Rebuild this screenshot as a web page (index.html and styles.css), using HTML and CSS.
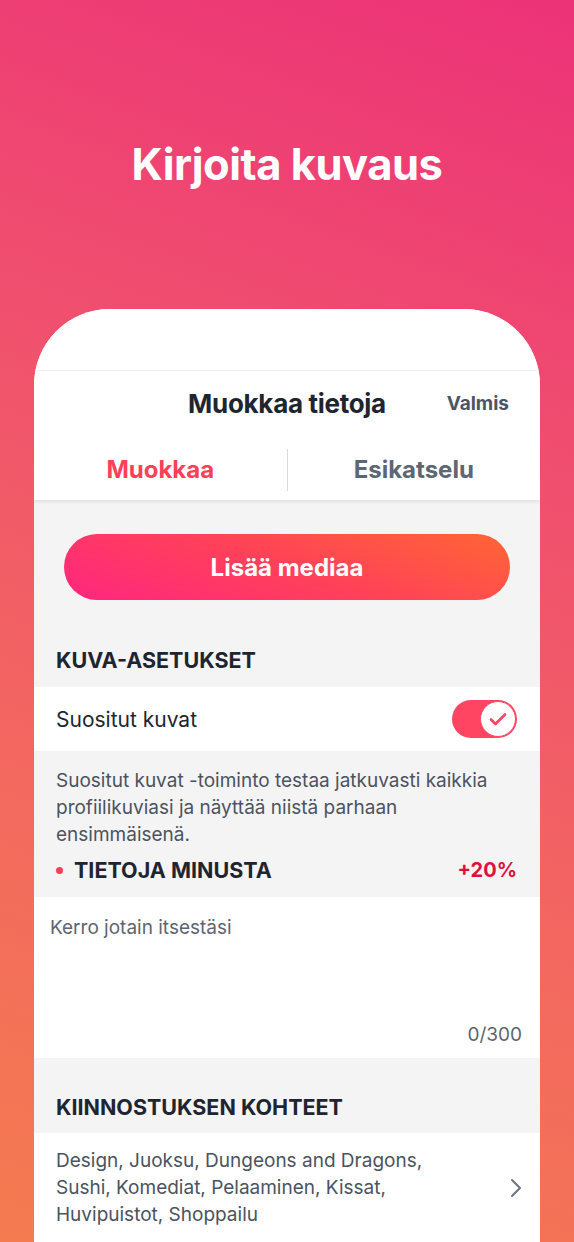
FILE: index.html
```html
<!DOCTYPE html>
<html lang="fi">
<head>
  <meta charset="UTF-8">
  <meta name="viewport" content="width=device-width, initial-scale=1.0">
  <title>Kirjoita kuvaus</title>
  <link rel="stylesheet" href="styles.css">
</head>
<body>
  <header class="hero">
    <h1>Kirjoita kuvaus</h1>
  </header>

  <main class="phone">
    <div class="phone-top"></div>

    <div class="nav">
      <div class="nav-bar">
        <span></span>
        <h2>Muokkaa tietoja</h2>
        <a class="done" href="#">Valmis</a>
      </div>
      <div class="tabs">
        <span class="tab active">Muokkaa</span>
        <span class="tab">Esikatselu</span>
      </div>
    </div>

    <div class="content">
      <button class="add-media">Lisää mediaa</button>

      <h3 class="section-title">KUVA-ASETUKSET</h3>
      <div class="row">
        <span>Suositut kuvat</span>
        <span class="toggle">
          <span class="knob">
            <svg width="18" height="14" viewBox="0 0 18 14"><path d="M2 7.5l4.5 4.5L16 2.5" fill="none" stroke="#ff4561" stroke-width="2.6" stroke-linecap="round" stroke-linejoin="round"/></svg>
          </span>
        </span>
      </div>
      <p class="hint">Suositut kuvat -toiminto testaa jatkuvasti kaikkia profiilikuviasi ja näyttää niistä parhaan<br>ensimmäisenä.</p>

      <div class="section-row">
        <h3 class="section-title dot">TIETOJA MINUSTA</h3>
        <span class="bonus">+20%</span>
      </div>
      <div class="about">
        <span class="placeholder">Kerro jotain itsestäsi</span>
        <span class="counter">0/300</span>
      </div>

      <h3 class="section-title interests-title">KIINNOSTUKSEN KOHTEET</h3>
      <div class="interests">
        <p>Design, Juoksu, Dungeons and Dragons, Sushi, Komediat, Pelaaminen, Kissat, Huvipuistot, Shoppailu</p>
        <svg width="12" height="20" viewBox="0 0 12 20"><path d="M2 2l8 8-8 8" fill="none" stroke="#6b7380" stroke-width="2" stroke-linecap="round" stroke-linejoin="round"/></svg>
      </div>
    </div>
  </main>
</body>
</html>
```

FILE: styles.css
```css
body {
  margin: 0;
  height: 1242px;
  overflow: hidden;
  font-family: Inter, Lato, sans-serif;
  color: #1e2530;
  background: linear-gradient(200deg, #ec3278 0%, #f0506e 35%, #f36a5e 70%, #f47b50 100%);
}

.hero { height: 309px; padding-top: 1px; box-sizing: border-box; }
.hero h1 { margin: 135px 0 0; text-align: center; color: #fff; font-size: 43.5px; font-weight: 700; line-height: 56px; letter-spacing: -0.5px; }

.phone {
  display: flex;
  flex-direction: column;
  margin: 0 34px;
  height: 933px;
  background: #f4f4f4;
  border-radius: 76px 76px 0 0;
  overflow: hidden;
}
.phone-top { flex: none; height: 61px; background: #fff; border-bottom: 1px solid #f0f0f0; }

.nav { flex: none; background: #fff; box-shadow: 0 2px 3px rgba(0, 0, 0, 0.08); position: relative; }
.nav-bar { display: grid; grid-template-columns: 1fr auto 1fr; align-items: center; height: 64px; padding: 0 31px; }
.nav-bar h2 { margin: 0; font-size: 26px; font-weight: 700; color: #1e2530; letter-spacing: -0.3px; }
.done { justify-self: end; color: #4b5563; text-decoration: none; font-size: 19px; font-weight: 700; }

.tabs { display: flex; height: 65px; align-items: center; padding-top: 5px; box-sizing: border-box; }
.tab { flex: 1; text-align: center; font-size: 24px; font-weight: 700; color: #5d6673; line-height: 42px; }
.tab + .tab { border-left: 1px solid #d7dbe0; }
.tab.active { color: #ff4058; }

.content { flex: 1; display: flex; flex-direction: column; padding-top: 34px; }

.add-media {
  flex: none;
  display: block;
  width: calc(100% - 60px);
  height: 66px;
  margin: 0 30px;
  border: 0;
  border-radius: 33px;
  background: linear-gradient(20deg, #ff2680 0%, #ff4159 50%, #ff6634 100%);
  color: #fff;
  font-family: inherit;
  font-size: 24px;
  font-weight: 700;
}

.section-title { margin: 0; padding: 47px 22px 14px; font-size: 21.5px; font-weight: 700; line-height: 26px; color: #1e2530; }

.row { flex: none; display: flex; align-items: center; justify-content: space-between; height: 64px; padding: 0 23px 0 22px; background: #fff; font-size: 21px; }

.toggle { display: flex; justify-content: flex-end; width: 65px; height: 38px; border-radius: 19px; background: #ff4561; }
.knob { display: flex; align-items: center; justify-content: center; width: 34px; height: 34px; margin: 1px; border: 1px solid #ff4561; border-radius: 50%; background: #fff; }

.hint { margin: 0; padding: 16px 22px 0; font-size: 19px; line-height: 27px; color: #4b5360; }

.section-row { flex: none; display: flex; align-items: center; justify-content: space-between; height: 49px; padding: 0 23px 5px 0; box-sizing: border-box; }
.section-row .section-title { padding: 0 0 0 40px; position: relative; }
.dot::before { content: ""; position: absolute; left: 22px; top: 10px; width: 7px; height: 7px; border-radius: 50%; background: #ff4058; }
.bonus { font-size: 20px; font-weight: 700; color: #e0103a; }

.about { flex: none; display: flex; flex-direction: column; justify-content: space-between; height: 161px; padding: 19px 18px 12px 16px; box-sizing: border-box; background: #fff; font-size: 19px; color: #5d6470; }
.counter { align-self: flex-end; }

.interests-title { padding-top: 36px; padding-bottom: 13px; }

.interests { flex: 1; display: flex; align-items: flex-start; justify-content: space-between; padding: 14px 18px 14px 22px; background: #fff; }
.interests p { margin: 0; width: 400px; font-size: 19px; line-height: 27px; color: #4b5360; }
.interests svg { margin-top: 31px; }
```
